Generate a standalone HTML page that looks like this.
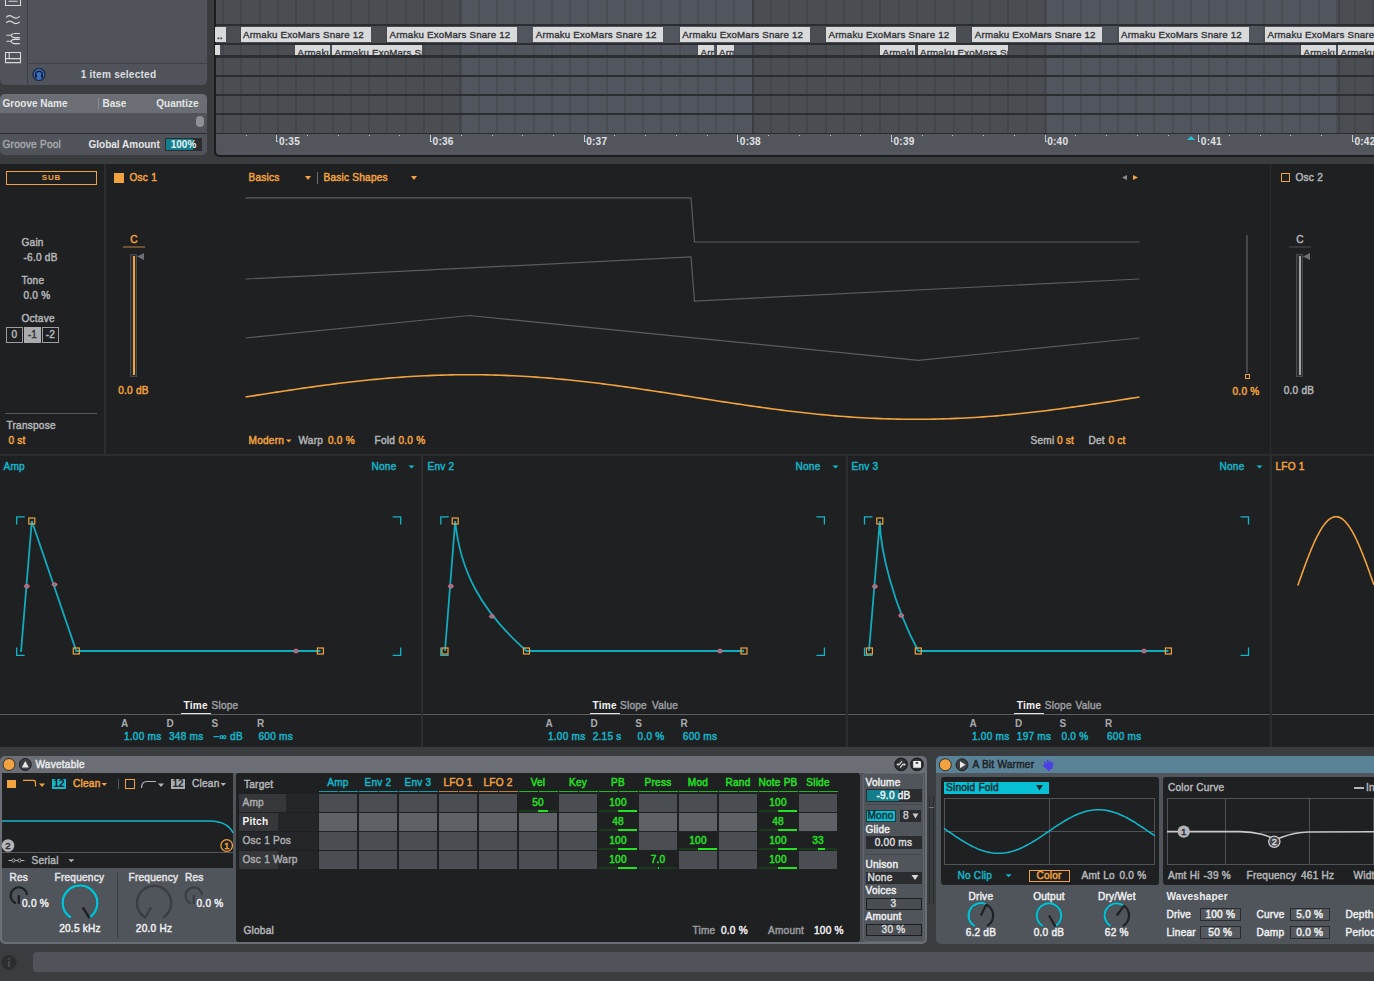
<!DOCTYPE html>
<html><head><meta charset="utf-8"><style>
html,body{margin:0;padding:0;width:1374px;height:981px;overflow:hidden;background:#393d40;}
body{position:relative;font-family:"Liberation Sans",sans-serif;}
.a{position:absolute;z-index:0;}
.t{position:absolute;line-height:14px;white-space:nowrap;z-index:2;-webkit-font-smoothing:antialiased;}
svg{position:absolute;left:0;top:0;z-index:1;}
</style></head><body>
<div class="a" style="left:0px;top:0px;width:1374px;height:164px;background:#393d40;"></div><div class="a" style="left:0px;top:0px;width:207px;height:85px;background:#50545a;border-radius:0 0 5px 5px;"></div><div class="a" style="left:27px;top:0px;width:1px;height:85px;background:#3d4044;"></div><div class="a" style="left:28px;top:63px;width:179px;height:1px;background:#3f4246;"></div><div class="t" style="top:67.80px;font-size:10.1px;color:#dcdde0;letter-spacing:0.22px;font-weight:700;left:18.5px;width:200px;text-align:center;">1 item selected</div><div class="a" style="left:0px;top:94px;width:207px;height:39px;background:#50545a;border-radius:5px 5px 0 0;"></div><div class="a" style="left:0px;top:94px;width:207px;height:19px;background:#6b6f75;border-radius:5px 5px 0 0;"></div><div class="t" style="top:96.50px;font-size:10px;color:#e4e5e7;font-weight:700;left:2.5px;">Groove Name</div><div class="a" style="left:98px;top:98px;width:1px;height:11px;background:#8b8e93;"></div><div class="t" style="top:96.50px;font-size:10px;color:#e4e5e7;font-weight:700;left:102.5px;">Base</div><div class="t" style="top:96.50px;font-size:10px;color:#e4e5e7;font-weight:700;left:-101.5px;width:300px;text-align:right;">Quantize</div><div class="a" style="left:196px;top:116px;width:8px;height:11px;background:#8d9095;border-radius:4px;"></div><div class="a" style="left:0px;top:133px;width:207px;height:1px;background:#2c2e31;"></div><div class="a" style="left:0px;top:134px;width:207px;height:21px;background:#50545a;border-radius:0 0 5px 5px;"></div><div class="t" style="top:137.80px;font-size:10.1px;color:#a4a7ab;letter-spacing:0.22px;-webkit-text-stroke:0.45px currentColor;left:2.5px;">Groove Pool</div><div class="t" style="top:137.50px;font-size:10px;color:#e4e5e7;font-weight:700;left:88.5px;">Global Amount</div><div class="a" style="left:165px;top:138px;width:37px;height:13px;background:#2a2c2f;"></div><div class="a" style="left:166px;top:139px;width:27px;height:11px;background:#137d8c;"></div><div class="t" style="top:137.50px;font-size:10px;color:#e8f4f6;font-weight:700;left:83.5px;width:200px;text-align:center;">100%</div><div class="a" style="left:214px;top:0px;width:1160px;height:157px;background:#1c1d1f;border-radius:0 0 0 5px;"></div><div class="a" style="left:215.5px;top:0px;width:1158.5px;height:133px;background:#51555d;"></div><div class="a" style="left:215.5px;top:0px;width:244.5px;height:133px;background:#4a4d52;"></div><div class="a" style="left:752px;top:0px;width:293px;height:133px;background:#4a4d52;"></div><div class="a" style="left:1338px;top:0px;width:36px;height:133px;background:#4a4d52;"></div><div class="a" style="left:221.5px;top:0px;width:2px;height:133px;background:rgba(0,0,0,0.09);"></div><div class="a" style="left:239.5px;top:0px;width:2px;height:133px;background:rgba(0,0,0,0.09);"></div><div class="a" style="left:258.5px;top:0px;width:2px;height:133px;background:rgba(0,0,0,0.09);"></div><div class="a" style="left:276.5px;top:0px;width:2px;height:133px;background:rgba(0,0,0,0.09);"></div><div class="a" style="left:294.5px;top:0px;width:2px;height:133px;background:rgba(0,0,0,0.09);"></div><div class="a" style="left:312.5px;top:0px;width:2px;height:133px;background:rgba(0,0,0,0.09);"></div><div class="a" style="left:331.5px;top:0px;width:2px;height:133px;background:rgba(0,0,0,0.09);"></div><div class="a" style="left:349.5px;top:0px;width:2px;height:133px;background:rgba(0,0,0,0.09);"></div><div class="a" style="left:367.5px;top:0px;width:2px;height:133px;background:rgba(0,0,0,0.09);"></div><div class="a" style="left:385.5px;top:0px;width:2px;height:133px;background:rgba(0,0,0,0.09);"></div><div class="a" style="left:404.5px;top:0px;width:2px;height:133px;background:rgba(0,0,0,0.09);"></div><div class="a" style="left:422.5px;top:0px;width:2px;height:133px;background:rgba(0,0,0,0.09);"></div><div class="a" style="left:440.5px;top:0px;width:2px;height:133px;background:rgba(0,0,0,0.09);"></div><div class="a" style="left:458.5px;top:0px;width:2px;height:133px;background:rgba(0,0,0,0.09);"></div><div class="a" style="left:477.5px;top:0px;width:2px;height:133px;background:rgba(0,0,0,0.09);"></div><div class="a" style="left:495.5px;top:0px;width:2px;height:133px;background:rgba(0,0,0,0.09);"></div><div class="a" style="left:513.5px;top:0px;width:2px;height:133px;background:rgba(0,0,0,0.09);"></div><div class="a" style="left:532.5px;top:0px;width:2px;height:133px;background:rgba(0,0,0,0.09);"></div><div class="a" style="left:550.5px;top:0px;width:2px;height:133px;background:rgba(0,0,0,0.09);"></div><div class="a" style="left:568.5px;top:0px;width:2px;height:133px;background:rgba(0,0,0,0.09);"></div><div class="a" style="left:586.5px;top:0px;width:2px;height:133px;background:rgba(0,0,0,0.09);"></div><div class="a" style="left:605.5px;top:0px;width:2px;height:133px;background:rgba(0,0,0,0.09);"></div><div class="a" style="left:623.5px;top:0px;width:2px;height:133px;background:rgba(0,0,0,0.09);"></div><div class="a" style="left:641.5px;top:0px;width:2px;height:133px;background:rgba(0,0,0,0.09);"></div><div class="a" style="left:659.5px;top:0px;width:2px;height:133px;background:rgba(0,0,0,0.09);"></div><div class="a" style="left:678.5px;top:0px;width:2px;height:133px;background:rgba(0,0,0,0.09);"></div><div class="a" style="left:696.5px;top:0px;width:2px;height:133px;background:rgba(0,0,0,0.09);"></div><div class="a" style="left:714.5px;top:0px;width:2px;height:133px;background:rgba(0,0,0,0.09);"></div><div class="a" style="left:732.5px;top:0px;width:2px;height:133px;background:rgba(0,0,0,0.09);"></div><div class="a" style="left:751.5px;top:0px;width:2px;height:133px;background:rgba(0,0,0,0.09);"></div><div class="a" style="left:769.5px;top:0px;width:2px;height:133px;background:rgba(0,0,0,0.09);"></div><div class="a" style="left:787.5px;top:0px;width:2px;height:133px;background:rgba(0,0,0,0.09);"></div><div class="a" style="left:805.5px;top:0px;width:2px;height:133px;background:rgba(0,0,0,0.09);"></div><div class="a" style="left:824.5px;top:0px;width:2px;height:133px;background:rgba(0,0,0,0.09);"></div><div class="a" style="left:842.5px;top:0px;width:2px;height:133px;background:rgba(0,0,0,0.09);"></div><div class="a" style="left:860.5px;top:0px;width:2px;height:133px;background:rgba(0,0,0,0.09);"></div><div class="a" style="left:878.5px;top:0px;width:2px;height:133px;background:rgba(0,0,0,0.09);"></div><div class="a" style="left:897.5px;top:0px;width:2px;height:133px;background:rgba(0,0,0,0.09);"></div><div class="a" style="left:915.5px;top:0px;width:2px;height:133px;background:rgba(0,0,0,0.09);"></div><div class="a" style="left:933.5px;top:0px;width:2px;height:133px;background:rgba(0,0,0,0.09);"></div><div class="a" style="left:952.5px;top:0px;width:2px;height:133px;background:rgba(0,0,0,0.09);"></div><div class="a" style="left:970.5px;top:0px;width:2px;height:133px;background:rgba(0,0,0,0.09);"></div><div class="a" style="left:988.5px;top:0px;width:2px;height:133px;background:rgba(0,0,0,0.09);"></div><div class="a" style="left:1006.5px;top:0px;width:2px;height:133px;background:rgba(0,0,0,0.09);"></div><div class="a" style="left:1025.5px;top:0px;width:2px;height:133px;background:rgba(0,0,0,0.09);"></div><div class="a" style="left:1043.5px;top:0px;width:2px;height:133px;background:rgba(0,0,0,0.09);"></div><div class="a" style="left:1061.5px;top:0px;width:2px;height:133px;background:rgba(0,0,0,0.09);"></div><div class="a" style="left:1079.5px;top:0px;width:2px;height:133px;background:rgba(0,0,0,0.09);"></div><div class="a" style="left:1098.5px;top:0px;width:2px;height:133px;background:rgba(0,0,0,0.09);"></div><div class="a" style="left:1116.5px;top:0px;width:2px;height:133px;background:rgba(0,0,0,0.09);"></div><div class="a" style="left:1134.5px;top:0px;width:2px;height:133px;background:rgba(0,0,0,0.09);"></div><div class="a" style="left:1152.5px;top:0px;width:2px;height:133px;background:rgba(0,0,0,0.09);"></div><div class="a" style="left:1171.5px;top:0px;width:2px;height:133px;background:rgba(0,0,0,0.09);"></div><div class="a" style="left:1189.5px;top:0px;width:2px;height:133px;background:rgba(0,0,0,0.09);"></div><div class="a" style="left:1207.5px;top:0px;width:2px;height:133px;background:rgba(0,0,0,0.09);"></div><div class="a" style="left:1225.5px;top:0px;width:2px;height:133px;background:rgba(0,0,0,0.09);"></div><div class="a" style="left:1244.5px;top:0px;width:2px;height:133px;background:rgba(0,0,0,0.09);"></div><div class="a" style="left:1262.5px;top:0px;width:2px;height:133px;background:rgba(0,0,0,0.09);"></div><div class="a" style="left:1280.5px;top:0px;width:2px;height:133px;background:rgba(0,0,0,0.09);"></div><div class="a" style="left:1298.5px;top:0px;width:2px;height:133px;background:rgba(0,0,0,0.09);"></div><div class="a" style="left:1317.5px;top:0px;width:2px;height:133px;background:rgba(0,0,0,0.09);"></div><div class="a" style="left:1335.5px;top:0px;width:2px;height:133px;background:rgba(0,0,0,0.09);"></div><div class="a" style="left:1353.5px;top:0px;width:2px;height:133px;background:rgba(0,0,0,0.09);"></div><div class="a" style="left:1371.5px;top:0px;width:2px;height:133px;background:rgba(0,0,0,0.09);"></div><div class="a" style="left:459.5px;top:0px;width:2px;height:133px;background:rgba(0,0,0,0.12);"></div><div class="a" style="left:751.5px;top:0px;width:2px;height:133px;background:rgba(0,0,0,0.12);"></div><div class="a" style="left:1044.5px;top:0px;width:2px;height:133px;background:rgba(0,0,0,0.12);"></div><div class="a" style="left:1337.5px;top:0px;width:2px;height:133px;background:rgba(0,0,0,0.12);"></div><div class="a" style="left:215.5px;top:24px;width:1158.5px;height:2px;background:#2b2d30;"></div><div class="a" style="left:215.5px;top:43px;width:1158.5px;height:2px;background:#2b2d30;"></div><div class="a" style="left:215.5px;top:55px;width:1158.5px;height:3px;background:#2b2d30;"></div><div class="a" style="left:215.5px;top:75px;width:1158.5px;height:1.5px;background:#2b2d30;"></div><div class="a" style="left:215.5px;top:94px;width:1158.5px;height:1.5px;background:#2b2d30;"></div><div class="a" style="left:215.5px;top:113px;width:1158.5px;height:1.5px;background:#2b2d30;"></div><div class="a" style="left:215.5px;top:132.5px;width:1158.5px;height:22px;background:#52565c;border-radius:0 0 0 4px;"></div><div class="a" style="left:215.5px;top:132.5px;width:1158.5px;height:1.5px;background:#2b2d30;"></div><div class="a" style="left:215px;top:27px;width:11px;height:15px;background:#d9dadc;"></div><div class="t" style="top:29.00px;font-size:10px;color:#2b2c2e;-webkit-text-stroke:0.45px currentColor;left:217px;">..</div><div class="a" style="left:240.5px;top:27px;width:130px;height:15px;background:#d9dadc;overflow:hidden"><div class="t" style="left:2.5px;top:-0.2px;line-height:15px;font-size:9.7px;letter-spacing:0.2px;color:#333437;-webkit-text-stroke:0.35px #333437">Armaku ExoMars Snare 12</div></div><div class="a" style="left:387px;top:27px;width:130px;height:15px;background:#d9dadc;overflow:hidden"><div class="t" style="left:2.5px;top:-0.2px;line-height:15px;font-size:9.7px;letter-spacing:0.2px;color:#333437;-webkit-text-stroke:0.35px #333437">Armaku ExoMars Snare 12</div></div><div class="a" style="left:533.3px;top:27px;width:130px;height:15px;background:#d9dadc;overflow:hidden"><div class="t" style="left:2.5px;top:-0.2px;line-height:15px;font-size:9.7px;letter-spacing:0.2px;color:#333437;-webkit-text-stroke:0.35px #333437">Armaku ExoMars Snare 12</div></div><div class="a" style="left:679.8px;top:27px;width:130px;height:15px;background:#d9dadc;overflow:hidden"><div class="t" style="left:2.5px;top:-0.2px;line-height:15px;font-size:9.7px;letter-spacing:0.2px;color:#333437;-webkit-text-stroke:0.35px #333437">Armaku ExoMars Snare 12</div></div><div class="a" style="left:826px;top:27px;width:130px;height:15px;background:#d9dadc;overflow:hidden"><div class="t" style="left:2.5px;top:-0.2px;line-height:15px;font-size:9.7px;letter-spacing:0.2px;color:#333437;-webkit-text-stroke:0.35px #333437">Armaku ExoMars Snare 12</div></div><div class="a" style="left:972.3px;top:27px;width:130px;height:15px;background:#d9dadc;overflow:hidden"><div class="t" style="left:2.5px;top:-0.2px;line-height:15px;font-size:9.7px;letter-spacing:0.2px;color:#333437;-webkit-text-stroke:0.35px #333437">Armaku ExoMars Snare 12</div></div><div class="a" style="left:1118.5px;top:27px;width:130px;height:15px;background:#d9dadc;overflow:hidden"><div class="t" style="left:2.5px;top:-0.2px;line-height:15px;font-size:9.7px;letter-spacing:0.2px;color:#333437;-webkit-text-stroke:0.35px #333437">Armaku ExoMars Snare 12</div></div><div class="a" style="left:1265px;top:27px;width:109px;height:15px;background:#d9dadc;overflow:hidden"><div class="t" style="left:2.5px;top:-0.2px;line-height:15px;font-size:9.7px;letter-spacing:0.2px;color:#333437;-webkit-text-stroke:0.35px #333437">Armaku ExoMars Snare 12</div></div><div class="a" style="left:215px;top:45px;width:5px;height:10px;background:#d9dadc;"></div><div class="a" style="left:295px;top:45px;width:35px;height:10px;background:#d9dadc;overflow:hidden"><div class="t" style="left:2.5px;top:1.0px;line-height:14px;font-size:9.7px;letter-spacing:0.2px;color:#333437;-webkit-text-stroke:0.35px #333437;white-space:nowrap">Armaku</div></div><div class="a" style="left:332px;top:45px;width:90px;height:10px;background:#d9dadc;overflow:hidden"><div class="t" style="left:2.5px;top:1.0px;line-height:14px;font-size:9.7px;letter-spacing:0.2px;color:#333437;-webkit-text-stroke:0.35px #333437;white-space:nowrap">Armaku ExoMars Snare 12</div></div><div class="a" style="left:698px;top:45px;width:16px;height:10px;background:#d9dadc;overflow:hidden"><div class="t" style="left:2.5px;top:1.0px;line-height:14px;font-size:9.7px;letter-spacing:0.2px;color:#333437;-webkit-text-stroke:0.35px #333437;white-space:nowrap">Armaku</div></div><div class="a" style="left:716.5px;top:45px;width:17px;height:10px;background:#d9dadc;overflow:hidden"><div class="t" style="left:2.5px;top:1.0px;line-height:14px;font-size:9.7px;letter-spacing:0.2px;color:#333437;-webkit-text-stroke:0.35px #333437;white-space:nowrap">Armaku</div></div><div class="a" style="left:880px;top:45px;width:35px;height:10px;background:#d9dadc;overflow:hidden"><div class="t" style="left:2.5px;top:1.0px;line-height:14px;font-size:9.7px;letter-spacing:0.2px;color:#333437;-webkit-text-stroke:0.35px #333437;white-space:nowrap">Armaku</div></div><div class="a" style="left:917.5px;top:45px;width:90px;height:10px;background:#d9dadc;overflow:hidden"><div class="t" style="left:2.5px;top:1.0px;line-height:14px;font-size:9.7px;letter-spacing:0.2px;color:#333437;-webkit-text-stroke:0.35px #333437;white-space:nowrap">Armaku ExoMars Snare 12</div></div><div class="a" style="left:1301px;top:45px;width:35px;height:10px;background:#d9dadc;overflow:hidden"><div class="t" style="left:2.5px;top:1.0px;line-height:14px;font-size:9.7px;letter-spacing:0.2px;color:#333437;-webkit-text-stroke:0.35px #333437;white-space:nowrap">Armaku</div></div><div class="a" style="left:1338px;top:45px;width:40px;height:10px;background:#d9dadc;overflow:hidden"><div class="t" style="left:2.5px;top:1.0px;line-height:14px;font-size:9.7px;letter-spacing:0.2px;color:#333437;-webkit-text-stroke:0.35px #333437;white-space:nowrap">Armaku ExoMars Snare 12</div></div><div class="a" style="left:246px;top:135px;width:1px;height:1px;background:#c7c9cc;"></div><div class="a" style="left:307px;top:135px;width:1px;height:1px;background:#c7c9cc;"></div><div class="a" style="left:338px;top:135px;width:1px;height:1px;background:#c7c9cc;"></div><div class="a" style="left:369px;top:135px;width:1px;height:1px;background:#c7c9cc;"></div><div class="a" style="left:399px;top:135px;width:1px;height:1px;background:#c7c9cc;"></div><div class="a" style="left:276px;top:135px;width:1px;height:7px;background:#c7c9cc;"></div><div class="a" style="left:276px;top:141px;width:2px;height:1px;background:#c7c9cc;"></div><div class="t" style="top:134.80px;font-size:10.1px;color:#e0e1e3;letter-spacing:0.22px;font-weight:700;left:278.9px;">0:35</div><div class="a" style="left:461px;top:135px;width:1px;height:1px;background:#c7c9cc;"></div><div class="a" style="left:492px;top:135px;width:1px;height:1px;background:#c7c9cc;"></div><div class="a" style="left:522px;top:135px;width:1px;height:1px;background:#c7c9cc;"></div><div class="a" style="left:553px;top:135px;width:1px;height:1px;background:#c7c9cc;"></div><div class="a" style="left:430px;top:135px;width:1px;height:7px;background:#c7c9cc;"></div><div class="a" style="left:430px;top:141px;width:2px;height:1px;background:#c7c9cc;"></div><div class="t" style="top:134.80px;font-size:10.1px;color:#e0e1e3;letter-spacing:0.22px;font-weight:700;left:432.54999999999995px;">0:36</div><div class="a" style="left:614px;top:135px;width:1px;height:1px;background:#c7c9cc;"></div><div class="a" style="left:645px;top:135px;width:1px;height:1px;background:#c7c9cc;"></div><div class="a" style="left:676px;top:135px;width:1px;height:1px;background:#c7c9cc;"></div><div class="a" style="left:707px;top:135px;width:1px;height:1px;background:#c7c9cc;"></div><div class="a" style="left:584px;top:135px;width:1px;height:7px;background:#c7c9cc;"></div><div class="a" style="left:584px;top:141px;width:2px;height:1px;background:#c7c9cc;"></div><div class="t" style="top:134.80px;font-size:10.1px;color:#e0e1e3;letter-spacing:0.22px;font-weight:700;left:586.2px;">0:37</div><div class="a" style="left:768px;top:135px;width:1px;height:1px;background:#c7c9cc;"></div><div class="a" style="left:799px;top:135px;width:1px;height:1px;background:#c7c9cc;"></div><div class="a" style="left:830px;top:135px;width:1px;height:1px;background:#c7c9cc;"></div><div class="a" style="left:860px;top:135px;width:1px;height:1px;background:#c7c9cc;"></div><div class="a" style="left:737px;top:135px;width:1px;height:7px;background:#c7c9cc;"></div><div class="a" style="left:737px;top:141px;width:2px;height:1px;background:#c7c9cc;"></div><div class="t" style="top:134.80px;font-size:10.1px;color:#e0e1e3;letter-spacing:0.22px;font-weight:700;left:739.85px;">0:38</div><div class="a" style="left:922px;top:135px;width:1px;height:1px;background:#c7c9cc;"></div><div class="a" style="left:952px;top:135px;width:1px;height:1px;background:#c7c9cc;"></div><div class="a" style="left:983px;top:135px;width:1px;height:1px;background:#c7c9cc;"></div><div class="a" style="left:1014px;top:135px;width:1px;height:1px;background:#c7c9cc;"></div><div class="a" style="left:891px;top:135px;width:1px;height:7px;background:#c7c9cc;"></div><div class="a" style="left:891px;top:141px;width:2px;height:1px;background:#c7c9cc;"></div><div class="t" style="top:134.80px;font-size:10.1px;color:#e0e1e3;letter-spacing:0.22px;font-weight:700;left:893.5px;">0:39</div><div class="a" style="left:1075px;top:135px;width:1px;height:1px;background:#c7c9cc;"></div><div class="a" style="left:1106px;top:135px;width:1px;height:1px;background:#c7c9cc;"></div><div class="a" style="left:1137px;top:135px;width:1px;height:1px;background:#c7c9cc;"></div><div class="a" style="left:1168px;top:135px;width:1px;height:1px;background:#c7c9cc;"></div><div class="a" style="left:1045px;top:135px;width:1px;height:7px;background:#c7c9cc;"></div><div class="a" style="left:1045px;top:141px;width:2px;height:1px;background:#c7c9cc;"></div><div class="t" style="top:134.80px;font-size:10.1px;color:#e0e1e3;letter-spacing:0.22px;font-weight:700;left:1047.15px;">0:40</div><div class="a" style="left:1229px;top:135px;width:1px;height:1px;background:#c7c9cc;"></div><div class="a" style="left:1260px;top:135px;width:1px;height:1px;background:#c7c9cc;"></div><div class="a" style="left:1290px;top:135px;width:1px;height:1px;background:#c7c9cc;"></div><div class="a" style="left:1321px;top:135px;width:1px;height:1px;background:#c7c9cc;"></div><div class="a" style="left:1198px;top:135px;width:1px;height:7px;background:#c7c9cc;"></div><div class="a" style="left:1198px;top:141px;width:2px;height:1px;background:#c7c9cc;"></div><div class="t" style="top:134.80px;font-size:10.1px;color:#e0e1e3;letter-spacing:0.22px;font-weight:700;left:1200.8000000000002px;">0:41</div><div class="a" style="left:1352px;top:135px;width:1px;height:7px;background:#c7c9cc;"></div><div class="a" style="left:1352px;top:141px;width:2px;height:1px;background:#c7c9cc;"></div><div class="t" style="top:134.80px;font-size:10.1px;color:#e0e1e3;letter-spacing:0.22px;font-weight:700;left:1354.4499999999998px;">0:42</div><div class="a" style="left:0px;top:164px;width:1374px;height:583px;background:#1f2021;"></div><div class="a" style="left:103.5px;top:164px;width:2px;height:291px;background:#2c2d2f;"></div><div class="a" style="left:1270px;top:164px;width:1px;height:291px;background:#2c2d2f;"></div><div class="a" style="left:0px;top:454px;width:1374px;height:2px;background:#2c2d2f;"></div><div class="a" style="left:6px;top:171px;width:91px;height:14px;box-shadow:inset 0 0 0 1px #f2a340;"></div><div class="t" style="top:171.00px;font-size:8px;color:#f2a340;font-weight:700;left:-48.5px;width:200px;text-align:center;letter-spacing:0.8px">SUB</div><div class="t" style="top:235.80px;font-size:10.1px;color:#b3b5b8;letter-spacing:0.22px;-webkit-text-stroke:0.45px currentColor;left:21.5px;">Gain</div><div class="t" style="top:250.80px;font-size:10.1px;color:#b3b5b8;letter-spacing:0.22px;-webkit-text-stroke:0.45px currentColor;left:23.5px;">-6.0 dB</div><div class="t" style="top:273.80px;font-size:10.1px;color:#b3b5b8;letter-spacing:0.22px;-webkit-text-stroke:0.45px currentColor;left:21.5px;">Tone</div><div class="t" style="top:288.80px;font-size:10.1px;color:#b3b5b8;letter-spacing:0.22px;-webkit-text-stroke:0.45px currentColor;left:23.5px;">0.0 %</div><div class="t" style="top:311.80px;font-size:10.1px;color:#b3b5b8;letter-spacing:0.22px;-webkit-text-stroke:0.45px currentColor;left:21.5px;">Octave</div><div class="a" style="left:6px;top:327px;width:17px;height:16px;box-shadow:inset 0 0 0 1px #9c9ea1;"></div><div class="t" style="top:328.30px;font-size:10.1px;color:#b3b5b8;letter-spacing:0.22px;-webkit-text-stroke:0.45px currentColor;left:-85.5px;width:200px;text-align:center;">0</div><div class="a" style="left:24px;top:327px;width:17px;height:16px;background:#a9abae;"></div><div class="t" style="top:328.30px;font-size:10.1px;color:#36383b;letter-spacing:0.22px;-webkit-text-stroke:0.45px currentColor;left:-67.5px;width:200px;text-align:center;">-1</div><div class="a" style="left:42px;top:327px;width:17px;height:16px;box-shadow:inset 0 0 0 1px #9c9ea1;"></div><div class="t" style="top:328.30px;font-size:10.1px;color:#b3b5b8;letter-spacing:0.22px;-webkit-text-stroke:0.45px currentColor;left:-49.5px;width:200px;text-align:center;">-2</div><div class="a" style="left:5px;top:413px;width:92px;height:1px;background:#56585b;"></div><div class="t" style="top:418.80px;font-size:10.1px;color:#b3b5b8;letter-spacing:0.22px;-webkit-text-stroke:0.45px currentColor;left:6.5px;">Transpose</div><div class="t" style="top:433.80px;font-size:10.1px;color:#f2a340;letter-spacing:0.22px;-webkit-text-stroke:0.45px currentColor;left:8.5px;">0 st</div><div class="a" style="left:114px;top:173px;width:10px;height:10px;background:#f2a340;"></div><div class="t" style="top:170.80px;font-size:10.1px;color:#f2a340;letter-spacing:0.22px;-webkit-text-stroke:0.45px currentColor;left:129.5px;">Osc 1</div><div class="t" style="top:232.80px;font-size:10.1px;color:#f2a340;letter-spacing:0.22px;-webkit-text-stroke:0.45px currentColor;left:34px;width:200px;text-align:center;">C</div><div class="a" style="left:123px;top:246px;width:22px;height:1.5px;background:#6f5232;"></div><div class="a" style="left:130px;top:254px;width:7px;height:123px;background:#2c2e31;box-shadow:inset 0 0 0 1px #46494d;"></div><div class="a" style="left:132.5px;top:256px;width:2px;height:119px;background:#f2a340;"></div><div class="t" style="top:383.80px;font-size:10.1px;color:#f2a340;letter-spacing:0.22px;-webkit-text-stroke:0.45px currentColor;left:33.5px;width:200px;text-align:center;">0.0 dB</div><div class="t" style="top:170.80px;font-size:10.1px;color:#f2a340;letter-spacing:0.22px;-webkit-text-stroke:0.45px currentColor;left:248.5px;">Basics</div><div class="a" style="left:317px;top:172px;width:1px;height:12px;background:#6d6f72;"></div><div class="t" style="top:170.80px;font-size:10.1px;color:#f2a340;letter-spacing:0.22px;-webkit-text-stroke:0.45px currentColor;left:323.5px;">Basic Shapes</div><div class="t" style="top:433.80px;font-size:10.1px;color:#f2a340;letter-spacing:0.22px;-webkit-text-stroke:0.45px currentColor;left:248.5px;">Modern</div><div class="t" style="top:433.80px;font-size:10.1px;color:#b3b5b8;letter-spacing:0.22px;-webkit-text-stroke:0.45px currentColor;left:298.5px;">Warp</div><div class="t" style="top:433.80px;font-size:10.1px;color:#f2a340;letter-spacing:0.22px;-webkit-text-stroke:0.45px currentColor;left:328px;">0.0 %</div><div class="t" style="top:433.80px;font-size:10.1px;color:#b3b5b8;letter-spacing:0.22px;-webkit-text-stroke:0.45px currentColor;left:374.5px;">Fold</div><div class="t" style="top:433.80px;font-size:10.1px;color:#f2a340;letter-spacing:0.22px;-webkit-text-stroke:0.45px currentColor;left:398.5px;">0.0 %</div><div class="t" style="top:433.80px;font-size:10.1px;color:#b3b5b8;letter-spacing:0.22px;-webkit-text-stroke:0.45px currentColor;left:1030.5px;">Semi</div><div class="t" style="top:433.80px;font-size:10.1px;color:#f2a340;letter-spacing:0.22px;-webkit-text-stroke:0.45px currentColor;left:1057px;">0 st</div><div class="t" style="top:433.80px;font-size:10.1px;color:#b3b5b8;letter-spacing:0.22px;-webkit-text-stroke:0.45px currentColor;left:1088.5px;">Det</div><div class="t" style="top:433.80px;font-size:10.1px;color:#f2a340;letter-spacing:0.22px;-webkit-text-stroke:0.45px currentColor;left:1108.5px;">0 ct</div><div class="a" style="left:1246px;top:235px;width:1.5px;height:138px;background:#46494c;"></div><div class="a" style="left:1244.5px;top:373.5px;width:5.5px;height:5.5px;box-shadow:inset 0 0 0 1px #f2a340;"></div><div class="t" style="top:384.80px;font-size:10.1px;color:#f2a340;letter-spacing:0.22px;-webkit-text-stroke:0.45px currentColor;left:1146px;width:200px;text-align:center;">0.0 %</div><div class="a" style="left:1281px;top:173px;width:9px;height:9px;box-shadow:inset 0 0 0 1px #f2a340;"></div><div class="t" style="top:170.80px;font-size:10.1px;color:#b3b5b8;letter-spacing:0.22px;-webkit-text-stroke:0.45px currentColor;left:1295.5px;">Osc 2</div><div class="t" style="top:232.80px;font-size:10.1px;color:#b3b5b8;letter-spacing:0.22px;-webkit-text-stroke:0.45px currentColor;left:1200px;width:200px;text-align:center;">C</div><div class="a" style="left:1289px;top:246px;width:22px;height:1.5px;background:#35373a;"></div><div class="a" style="left:1296px;top:254px;width:7px;height:123px;background:#2c2e31;box-shadow:inset 0 0 0 1px #46494d;"></div><div class="a" style="left:1298.5px;top:256px;width:2px;height:119px;background:#a3a5a8;"></div><div class="t" style="top:383.80px;font-size:10.1px;color:#b3b5b8;letter-spacing:0.22px;-webkit-text-stroke:0.45px currentColor;left:1199px;width:200px;text-align:center;">0.0 dB</div><div class="a" style="left:421px;top:456px;width:2px;height:291px;background:#2c2d2f;"></div><div class="a" style="left:846px;top:456px;width:2px;height:291px;background:#2c2d2f;"></div><div class="a" style="left:1270px;top:456px;width:2px;height:291px;background:#2c2d2f;"></div><div class="t" style="top:459.80px;font-size:10.1px;color:#12b5c9;letter-spacing:0.22px;-webkit-text-stroke:0.45px currentColor;left:3.5px;">Amp</div><div class="t" style="top:459.80px;font-size:10.1px;color:#12b5c9;letter-spacing:0.22px;-webkit-text-stroke:0.45px currentColor;left:371.5px;">None</div><div class="t" style="top:698.80px;font-size:10.1px;color:#f2f2f2;letter-spacing:0.22px;font-weight:700;left:183.5px;">Time</div><div class="t" style="top:698.80px;font-size:10.1px;color:#9a9ca0;letter-spacing:0.22px;-webkit-text-stroke:0.45px currentColor;left:211.5px;">Slope</div><div class="a" style="left:180.5px;top:713px;width:30px;height:2px;background:#e6e6e6;"></div><div class="a" style="left:0px;top:714px;width:421px;height:1px;background:#5b5d60;"></div><div class="t" style="top:716.50px;font-size:10px;color:#a9abae;font-weight:700;left:121px;">A</div><div class="t" style="top:716.50px;font-size:10px;color:#a9abae;font-weight:700;left:166.5px;">D</div><div class="t" style="top:716.50px;font-size:10px;color:#a9abae;font-weight:700;left:211.5px;">S</div><div class="t" style="top:716.50px;font-size:10px;color:#a9abae;font-weight:700;left:257px;">R</div><div class="t" style="top:729.80px;font-size:10.1px;color:#12b5c9;letter-spacing:0.22px;-webkit-text-stroke:0.45px currentColor;left:124px;">1.00 ms</div><div class="t" style="top:729.80px;font-size:10.1px;color:#12b5c9;letter-spacing:0.22px;-webkit-text-stroke:0.45px currentColor;left:169px;">348 ms</div><div class="t" style="top:729.80px;font-size:10.1px;color:#12b5c9;letter-spacing:0.22px;-webkit-text-stroke:0.45px currentColor;left:213.5px;">−∞ dB</div><div class="t" style="top:729.80px;font-size:10.1px;color:#12b5c9;letter-spacing:0.22px;-webkit-text-stroke:0.45px currentColor;left:258.5px;">600 ms</div><div class="t" style="top:459.80px;font-size:10.1px;color:#12b5c9;letter-spacing:0.22px;-webkit-text-stroke:0.45px currentColor;left:427.5px;">Env 2</div><div class="t" style="top:459.80px;font-size:10.1px;color:#12b5c9;letter-spacing:0.22px;-webkit-text-stroke:0.45px currentColor;left:795.5px;">None</div><div class="t" style="top:698.80px;font-size:10.1px;color:#f2f2f2;letter-spacing:0.22px;font-weight:700;left:592.5px;">Time</div><div class="t" style="top:698.80px;font-size:10.1px;color:#9a9ca0;letter-spacing:0.22px;-webkit-text-stroke:0.45px currentColor;left:620px;">Slope</div><div class="t" style="top:698.80px;font-size:10.1px;color:#9a9ca0;letter-spacing:0.22px;-webkit-text-stroke:0.45px currentColor;left:652px;">Value</div><div class="a" style="left:589.5px;top:713px;width:30px;height:2px;background:#e6e6e6;"></div><div class="a" style="left:423px;top:714px;width:423px;height:1px;background:#5b5d60;"></div><div class="t" style="top:716.50px;font-size:10px;color:#a9abae;font-weight:700;left:545.5px;">A</div><div class="t" style="top:716.50px;font-size:10px;color:#a9abae;font-weight:700;left:590.5px;">D</div><div class="t" style="top:716.50px;font-size:10px;color:#a9abae;font-weight:700;left:635.3px;">S</div><div class="t" style="top:716.50px;font-size:10px;color:#a9abae;font-weight:700;left:680.5px;">R</div><div class="t" style="top:729.80px;font-size:10.1px;color:#12b5c9;letter-spacing:0.22px;-webkit-text-stroke:0.45px currentColor;left:548px;">1.00 ms</div><div class="t" style="top:729.80px;font-size:10.1px;color:#12b5c9;letter-spacing:0.22px;-webkit-text-stroke:0.45px currentColor;left:592.7px;">2.15 s</div><div class="t" style="top:729.80px;font-size:10.1px;color:#12b5c9;letter-spacing:0.22px;-webkit-text-stroke:0.45px currentColor;left:637.6px;">0.0 %</div><div class="t" style="top:729.80px;font-size:10.1px;color:#12b5c9;letter-spacing:0.22px;-webkit-text-stroke:0.45px currentColor;left:682.8px;">600 ms</div><div class="t" style="top:459.80px;font-size:10.1px;color:#12b5c9;letter-spacing:0.22px;-webkit-text-stroke:0.45px currentColor;left:851.5px;">Env 3</div><div class="t" style="top:459.80px;font-size:10.1px;color:#12b5c9;letter-spacing:0.22px;-webkit-text-stroke:0.45px currentColor;left:1219.5px;">None</div><div class="t" style="top:698.80px;font-size:10.1px;color:#f2f2f2;letter-spacing:0.22px;font-weight:700;left:1016.8px;">Time</div><div class="t" style="top:698.80px;font-size:10.1px;color:#9a9ca0;letter-spacing:0.22px;-webkit-text-stroke:0.45px currentColor;left:1044.8px;">Slope</div><div class="t" style="top:698.80px;font-size:10.1px;color:#9a9ca0;letter-spacing:0.22px;-webkit-text-stroke:0.45px currentColor;left:1075.5px;">Value</div><div class="a" style="left:1013.8px;top:713px;width:30px;height:2px;background:#e6e6e6;"></div><div class="a" style="left:848px;top:714px;width:422px;height:1px;background:#5b5d60;"></div><div class="t" style="top:716.50px;font-size:10px;color:#a9abae;font-weight:700;left:969.4px;">A</div><div class="t" style="top:716.50px;font-size:10px;color:#a9abae;font-weight:700;left:1014.9px;">D</div><div class="t" style="top:716.50px;font-size:10px;color:#a9abae;font-weight:700;left:1059.6px;">S</div><div class="t" style="top:716.50px;font-size:10px;color:#a9abae;font-weight:700;left:1105px;">R</div><div class="t" style="top:729.80px;font-size:10.1px;color:#12b5c9;letter-spacing:0.22px;-webkit-text-stroke:0.45px currentColor;left:972px;">1.00 ms</div><div class="t" style="top:729.80px;font-size:10.1px;color:#12b5c9;letter-spacing:0.22px;-webkit-text-stroke:0.45px currentColor;left:1016.8px;">197 ms</div><div class="t" style="top:729.80px;font-size:10.1px;color:#12b5c9;letter-spacing:0.22px;-webkit-text-stroke:0.45px currentColor;left:1061.5px;">0.0 %</div><div class="t" style="top:729.80px;font-size:10.1px;color:#12b5c9;letter-spacing:0.22px;-webkit-text-stroke:0.45px currentColor;left:1107px;">600 ms</div><div class="t" style="top:459.80px;font-size:10.1px;color:#f2a340;letter-spacing:0.22px;-webkit-text-stroke:0.45px currentColor;left:1275.5px;">LFO 1</div><div class="a" style="left:1272px;top:714px;width:102px;height:1px;background:#5b5d60;"></div><div class="a" style="left:0px;top:747px;width:1374px;height:234px;background:#393d40;"></div><div class="a" style="left:0px;top:756px;width:926.5px;height:187.5px;background:#6b6f75;border-radius:5px;"></div><div class="a" style="left:1.5px;top:773px;width:923px;height:168.5px;background:#50545b;border-radius:0 0 4px 4px;"></div><div class="t" style="top:757.80px;font-size:10.1px;color:#e8e9ea;letter-spacing:0.22px;-webkit-text-stroke:0.45px currentColor;left:35.5px;">Wavetable</div><div class="a" style="left:2px;top:773px;width:231px;height:95px;background:#1f2021;"></div><div class="a" style="left:6.5px;top:780px;width:9px;height:8px;background:#f2a340;"></div><div class="a" style="left:52px;top:779px;width:14px;height:10px;background:#17b5c8;"></div><div class="t" style="top:777.00px;font-size:10px;color:#101820;font-weight:700;left:-41px;width:200px;text-align:center;">12</div><div class="t" style="top:777.30px;font-size:10.1px;color:#f2a340;letter-spacing:0.22px;-webkit-text-stroke:0.45px currentColor;left:73px;">Clean</div><div class="a" style="left:118px;top:779px;width:1px;height:10px;background:#55575a;"></div><div class="a" style="left:125px;top:779px;width:10px;height:10px;box-shadow:inset 0 0 0 1px #f2a340;"></div><div class="a" style="left:171px;top:779px;width:14px;height:10px;background:#a9abae;"></div><div class="t" style="top:777.00px;font-size:10px;color:#2a2b2e;font-weight:700;left:78px;width:200px;text-align:center;">12</div><div class="t" style="top:777.30px;font-size:10.1px;color:#b3b5b8;letter-spacing:0.22px;-webkit-text-stroke:0.45px currentColor;left:192px;">Clean</div><div class="t" style="top:838.50px;font-size:9.5px;color:#2a2b2e;-webkit-text-stroke:0.45px currentColor;left:-92px;width:200px;text-align:center;">2</div><div class="t" style="top:838.50px;font-size:9px;color:#f2a340;-webkit-text-stroke:0.45px currentColor;left:126.69999999999999px;width:200px;text-align:center;">1</div><div class="a" style="left:2px;top:852px;width:231px;height:1px;background:#55575a;"></div><div class="t" style="top:853.80px;font-size:10.1px;color:#b3b5b8;letter-spacing:0.22px;-webkit-text-stroke:0.45px currentColor;left:31.5px;">Serial</div><div class="t" style="top:870.80px;font-size:10.1px;color:#e4e5e7;letter-spacing:0.22px;-webkit-text-stroke:0.45px currentColor;left:9.5px;">Res</div><div class="t" style="top:870.80px;font-size:10.1px;color:#e4e5e7;letter-spacing:0.22px;-webkit-text-stroke:0.45px currentColor;left:54.5px;">Frequency</div><div class="t" style="top:870.80px;font-size:10.1px;color:#e4e5e7;letter-spacing:0.22px;-webkit-text-stroke:0.45px currentColor;left:128.5px;">Frequency</div><div class="t" style="top:870.80px;font-size:10.1px;color:#e4e5e7;letter-spacing:0.22px;-webkit-text-stroke:0.45px currentColor;left:185px;">Res</div><div class="a" style="left:116.5px;top:873px;width:1px;height:65px;background:#3a3c3f;"></div><div class="t" style="top:896.80px;font-size:10.1px;color:#eeeff0;letter-spacing:0.22px;-webkit-text-stroke:0.45px currentColor;left:-64.5px;width:200px;text-align:center;">0.0 %</div><div class="t" style="top:921.80px;font-size:10.1px;color:#eeeff0;letter-spacing:0.22px;-webkit-text-stroke:0.45px currentColor;left:-20px;width:200px;text-align:center;">20.5 kHz</div><div class="t" style="top:921.80px;font-size:10.1px;color:#eeeff0;letter-spacing:0.22px;-webkit-text-stroke:0.45px currentColor;left:54px;width:200px;text-align:center;">20.0 Hz</div><div class="t" style="top:896.80px;font-size:10.1px;color:#eeeff0;letter-spacing:0.22px;-webkit-text-stroke:0.45px currentColor;left:110px;width:200px;text-align:center;">0.0 %</div><div class="a" style="left:236px;top:773px;width:624px;height:169px;background:#1f2021;border-radius:3px;"></div><div class="t" style="top:778.30px;font-size:10.1px;color:#b3b5b8;letter-spacing:0.22px;-webkit-text-stroke:0.45px currentColor;left:244px;">Target</div><div class="t" style="top:776.30px;font-size:10.1px;color:#12b5c9;letter-spacing:0.22px;-webkit-text-stroke:0.45px currentColor;left:238px;width:200px;text-align:center;">Amp</div><div class="a" style="left:318.5px;top:791px;width:19px;height:1.2px;background:#1a9aaa;"></div><div class="a" style="left:338.5px;top:791px;width:19px;height:1.2px;background:#1a9aaa;"></div><div class="t" style="top:776.30px;font-size:10.1px;color:#12b5c9;letter-spacing:0.22px;-webkit-text-stroke:0.45px currentColor;left:278px;width:200px;text-align:center;">Env 2</div><div class="a" style="left:358.5px;top:791px;width:19px;height:1.2px;background:#1a9aaa;"></div><div class="a" style="left:378.5px;top:791px;width:19px;height:1.2px;background:#1a9aaa;"></div><div class="t" style="top:776.30px;font-size:10.1px;color:#12b5c9;letter-spacing:0.22px;-webkit-text-stroke:0.45px currentColor;left:318px;width:200px;text-align:center;">Env 3</div><div class="a" style="left:398.5px;top:791px;width:19px;height:1.2px;background:#1a9aaa;"></div><div class="a" style="left:418.5px;top:791px;width:19px;height:1.2px;background:#1a9aaa;"></div><div class="t" style="top:776.30px;font-size:10.1px;color:#f2a340;letter-spacing:0.22px;-webkit-text-stroke:0.45px currentColor;left:358px;width:200px;text-align:center;">LFO 1</div><div class="a" style="left:438.5px;top:791px;width:19px;height:1.2px;background:#c07e3c;"></div><div class="a" style="left:458.5px;top:791px;width:19px;height:1.2px;background:#c07e3c;"></div><div class="t" style="top:776.30px;font-size:10.1px;color:#f2a340;letter-spacing:0.22px;-webkit-text-stroke:0.45px currentColor;left:398px;width:200px;text-align:center;">LFO 2</div><div class="a" style="left:478.5px;top:791px;width:19px;height:1.2px;background:#c07e3c;"></div><div class="a" style="left:498.5px;top:791px;width:19px;height:1.2px;background:#c07e3c;"></div><div class="t" style="top:776.30px;font-size:10.1px;color:#22e222;letter-spacing:0.22px;-webkit-text-stroke:0.45px currentColor;left:438px;width:200px;text-align:center;">Vel</div><div class="a" style="left:518.5px;top:791px;width:19px;height:1.2px;background:#22b822;"></div><div class="a" style="left:538.5px;top:791px;width:19px;height:1.2px;background:#22b822;"></div><div class="t" style="top:776.30px;font-size:10.1px;color:#22e222;letter-spacing:0.22px;-webkit-text-stroke:0.45px currentColor;left:478px;width:200px;text-align:center;">Key</div><div class="a" style="left:558.5px;top:791px;width:19px;height:1.2px;background:#22b822;"></div><div class="a" style="left:578.5px;top:791px;width:19px;height:1.2px;background:#22b822;"></div><div class="t" style="top:776.30px;font-size:10.1px;color:#22e222;letter-spacing:0.22px;-webkit-text-stroke:0.45px currentColor;left:518px;width:200px;text-align:center;">PB</div><div class="a" style="left:598.5px;top:791px;width:19px;height:1.2px;background:#22b822;"></div><div class="a" style="left:618.5px;top:791px;width:19px;height:1.2px;background:#22b822;"></div><div class="t" style="top:776.30px;font-size:10.1px;color:#22e222;letter-spacing:0.22px;-webkit-text-stroke:0.45px currentColor;left:558px;width:200px;text-align:center;">Press</div><div class="a" style="left:638.5px;top:791px;width:19px;height:1.2px;background:#22b822;"></div><div class="a" style="left:658.5px;top:791px;width:19px;height:1.2px;background:#22b822;"></div><div class="t" style="top:776.30px;font-size:10.1px;color:#22e222;letter-spacing:0.22px;-webkit-text-stroke:0.45px currentColor;left:598px;width:200px;text-align:center;">Mod</div><div class="a" style="left:678.5px;top:791px;width:19px;height:1.2px;background:#22b822;"></div><div class="a" style="left:698.5px;top:791px;width:19px;height:1.2px;background:#22b822;"></div><div class="t" style="top:776.30px;font-size:10.1px;color:#22e222;letter-spacing:0.22px;-webkit-text-stroke:0.45px currentColor;left:638px;width:200px;text-align:center;">Rand</div><div class="a" style="left:718.5px;top:791px;width:19px;height:1.2px;background:#22b822;"></div><div class="a" style="left:738.5px;top:791px;width:19px;height:1.2px;background:#22b822;"></div><div class="t" style="top:776.30px;font-size:10.1px;color:#22e222;letter-spacing:0.22px;-webkit-text-stroke:0.45px currentColor;left:678px;width:200px;text-align:center;">Note PB</div><div class="a" style="left:758.5px;top:791px;width:19px;height:1.2px;background:#22b822;"></div><div class="a" style="left:778.5px;top:791px;width:19px;height:1.2px;background:#22b822;"></div><div class="t" style="top:776.30px;font-size:10.1px;color:#22e222;letter-spacing:0.22px;-webkit-text-stroke:0.45px currentColor;left:718px;width:200px;text-align:center;">Slide</div><div class="a" style="left:798.5px;top:791px;width:19px;height:1.2px;background:#22b822;"></div><div class="a" style="left:818.5px;top:791px;width:19px;height:1.2px;background:#22b822;"></div><div class="a" style="left:239px;top:794px;width:79px;height:18px;background:#252629;"></div><div class="a" style="left:239px;top:794px;width:47px;height:18px;background:#36373a;"></div><div class="t" style="top:796.30px;font-size:10.1px;color:#a9abae;letter-spacing:0.22px;-webkit-text-stroke:0.45px currentColor;left:242.5px;">Amp</div><div class="a" style="left:319px;top:794px;width:38px;height:18px;background:#4a4d51;"></div><div class="a" style="left:359px;top:794px;width:38px;height:18px;background:#4a4d51;"></div><div class="a" style="left:399px;top:794px;width:38px;height:18px;background:#4a4d51;"></div><div class="a" style="left:439px;top:794px;width:38px;height:18px;background:#4a4d51;"></div><div class="a" style="left:479px;top:794px;width:38px;height:18px;background:#4a4d51;"></div><div class="a" style="left:519px;top:810px;width:38px;height:2px;background:#1a3a1c;"></div><div class="a" style="left:538px;top:810px;width:10px;height:2px;background:#22e222;"></div><div class="t" style="top:795.90px;font-size:10.1px;color:#22e222;letter-spacing:0.22px;-webkit-text-stroke:0.45px currentColor;left:438px;width:200px;text-align:center;">50</div><div class="a" style="left:559px;top:794px;width:38px;height:18px;background:#4a4d51;"></div><div class="a" style="left:599px;top:810px;width:38px;height:2px;background:#1a3a1c;"></div><div class="a" style="left:618px;top:810px;width:19px;height:2px;background:#22e222;"></div><div class="t" style="top:795.90px;font-size:10.1px;color:#22e222;letter-spacing:0.22px;-webkit-text-stroke:0.45px currentColor;left:518px;width:200px;text-align:center;">100</div><div class="a" style="left:639px;top:794px;width:38px;height:18px;background:#4a4d51;"></div><div class="a" style="left:679px;top:794px;width:38px;height:18px;background:#4a4d51;"></div><div class="a" style="left:719px;top:794px;width:38px;height:18px;background:#4a4d51;"></div><div class="a" style="left:759px;top:810px;width:38px;height:2px;background:#1a3a1c;"></div><div class="a" style="left:778px;top:810px;width:19px;height:2px;background:#22e222;"></div><div class="t" style="top:795.90px;font-size:10.1px;color:#22e222;letter-spacing:0.22px;-webkit-text-stroke:0.45px currentColor;left:678px;width:200px;text-align:center;">100</div><div class="a" style="left:799px;top:794px;width:38px;height:18px;background:#4a4d51;"></div><div class="a" style="left:239px;top:813px;width:79px;height:18px;background:#252629;"></div><div class="a" style="left:239px;top:813px;width:39px;height:18px;background:#36373a;"></div><div class="t" style="top:815.30px;font-size:10.1px;color:#f4f4f4;letter-spacing:0.22px;font-weight:700;left:242.5px;">Pitch</div><div class="a" style="left:319px;top:813px;width:38px;height:18px;background:#5e6165;"></div><div class="a" style="left:359px;top:813px;width:38px;height:18px;background:#5e6165;"></div><div class="a" style="left:399px;top:813px;width:38px;height:18px;background:#5e6165;"></div><div class="a" style="left:439px;top:813px;width:38px;height:18px;background:#5e6165;"></div><div class="a" style="left:479px;top:813px;width:38px;height:18px;background:#5e6165;"></div><div class="a" style="left:519px;top:813px;width:38px;height:18px;background:#5e6165;"></div><div class="a" style="left:559px;top:813px;width:38px;height:18px;background:#5e6165;"></div><div class="a" style="left:599px;top:829px;width:38px;height:2px;background:#1a3a1c;"></div><div class="a" style="left:618px;top:829px;width:19px;height:2px;background:#22e222;"></div><div class="t" style="top:814.90px;font-size:10.1px;color:#22e222;letter-spacing:0.22px;-webkit-text-stroke:0.45px currentColor;left:518px;width:200px;text-align:center;">48</div><div class="a" style="left:639px;top:813px;width:38px;height:18px;background:#5e6165;"></div><div class="a" style="left:679px;top:813px;width:38px;height:18px;background:#5e6165;"></div><div class="a" style="left:719px;top:813px;width:38px;height:18px;background:#5e6165;"></div><div class="a" style="left:759px;top:829px;width:38px;height:2px;background:#1a3a1c;"></div><div class="a" style="left:778px;top:829px;width:19px;height:2px;background:#22e222;"></div><div class="t" style="top:814.90px;font-size:10.1px;color:#22e222;letter-spacing:0.22px;-webkit-text-stroke:0.45px currentColor;left:678px;width:200px;text-align:center;">48</div><div class="a" style="left:799px;top:813px;width:38px;height:18px;background:#5e6165;"></div><div class="a" style="left:239px;top:832px;width:79px;height:18px;background:#252629;"></div><div class="t" style="top:834.30px;font-size:10.1px;color:#a9abae;letter-spacing:0.22px;-webkit-text-stroke:0.45px currentColor;left:242.5px;">Osc 1 Pos</div><div class="a" style="left:319px;top:832px;width:38px;height:18px;background:#4a4d51;"></div><div class="a" style="left:359px;top:832px;width:38px;height:18px;background:#4a4d51;"></div><div class="a" style="left:399px;top:832px;width:38px;height:18px;background:#4a4d51;"></div><div class="a" style="left:439px;top:832px;width:38px;height:18px;background:#4a4d51;"></div><div class="a" style="left:479px;top:832px;width:38px;height:18px;background:#4a4d51;"></div><div class="a" style="left:519px;top:832px;width:38px;height:18px;background:#4a4d51;"></div><div class="a" style="left:559px;top:832px;width:38px;height:18px;background:#4a4d51;"></div><div class="a" style="left:599px;top:848px;width:38px;height:2px;background:#1a3a1c;"></div><div class="a" style="left:618px;top:848px;width:19px;height:2px;background:#22e222;"></div><div class="t" style="top:833.90px;font-size:10.1px;color:#22e222;letter-spacing:0.22px;-webkit-text-stroke:0.45px currentColor;left:518px;width:200px;text-align:center;">100</div><div class="a" style="left:639px;top:832px;width:38px;height:18px;background:#4a4d51;"></div><div class="a" style="left:679px;top:848px;width:38px;height:2px;background:#1a3a1c;"></div><div class="a" style="left:698px;top:848px;width:19px;height:2px;background:#22e222;"></div><div class="t" style="top:833.90px;font-size:10.1px;color:#22e222;letter-spacing:0.22px;-webkit-text-stroke:0.45px currentColor;left:598px;width:200px;text-align:center;">100</div><div class="a" style="left:719px;top:832px;width:38px;height:18px;background:#4a4d51;"></div><div class="a" style="left:759px;top:848px;width:38px;height:2px;background:#1a3a1c;"></div><div class="a" style="left:778px;top:848px;width:19px;height:2px;background:#22e222;"></div><div class="t" style="top:833.90px;font-size:10.1px;color:#22e222;letter-spacing:0.22px;-webkit-text-stroke:0.45px currentColor;left:678px;width:200px;text-align:center;">100</div><div class="a" style="left:799px;top:848px;width:38px;height:2px;background:#1a3a1c;"></div><div class="a" style="left:818px;top:848px;width:7px;height:2px;background:#22e222;"></div><div class="t" style="top:833.90px;font-size:10.1px;color:#22e222;letter-spacing:0.22px;-webkit-text-stroke:0.45px currentColor;left:718px;width:200px;text-align:center;">33</div><div class="a" style="left:239px;top:851px;width:79px;height:18px;background:#252629;"></div><div class="a" style="left:239px;top:851px;width:39px;height:18px;background:#36373a;"></div><div class="t" style="top:853.30px;font-size:10.1px;color:#a9abae;letter-spacing:0.22px;-webkit-text-stroke:0.45px currentColor;left:242.5px;">Osc 1 Warp</div><div class="a" style="left:319px;top:851px;width:38px;height:18px;background:#4a4d51;"></div><div class="a" style="left:359px;top:851px;width:38px;height:18px;background:#4a4d51;"></div><div class="a" style="left:399px;top:851px;width:38px;height:18px;background:#4a4d51;"></div><div class="a" style="left:439px;top:851px;width:38px;height:18px;background:#4a4d51;"></div><div class="a" style="left:479px;top:851px;width:38px;height:18px;background:#4a4d51;"></div><div class="a" style="left:519px;top:851px;width:38px;height:18px;background:#4a4d51;"></div><div class="a" style="left:559px;top:851px;width:38px;height:18px;background:#4a4d51;"></div><div class="a" style="left:599px;top:867px;width:38px;height:2px;background:#1a3a1c;"></div><div class="a" style="left:618px;top:867px;width:19px;height:2px;background:#22e222;"></div><div class="t" style="top:852.90px;font-size:10.1px;color:#22e222;letter-spacing:0.22px;-webkit-text-stroke:0.45px currentColor;left:518px;width:200px;text-align:center;">100</div><div class="a" style="left:639px;top:867px;width:38px;height:2px;background:#1a3a1c;"></div><div class="a" style="left:658px;top:867px;width:1px;height:2px;background:#22e222;"></div><div class="t" style="top:852.90px;font-size:10.1px;color:#22e222;letter-spacing:0.22px;-webkit-text-stroke:0.45px currentColor;left:558px;width:200px;text-align:center;">7.0</div><div class="a" style="left:679px;top:851px;width:38px;height:18px;background:#4a4d51;"></div><div class="a" style="left:719px;top:851px;width:38px;height:18px;background:#4a4d51;"></div><div class="a" style="left:759px;top:867px;width:38px;height:2px;background:#1a3a1c;"></div><div class="a" style="left:778px;top:867px;width:19px;height:2px;background:#22e222;"></div><div class="t" style="top:852.90px;font-size:10.1px;color:#22e222;letter-spacing:0.22px;-webkit-text-stroke:0.45px currentColor;left:678px;width:200px;text-align:center;">100</div><div class="a" style="left:799px;top:851px;width:38px;height:18px;background:#4a4d51;"></div><div class="t" style="top:923.80px;font-size:10.1px;color:#b3b5b8;letter-spacing:0.22px;-webkit-text-stroke:0.45px currentColor;left:243.5px;">Global</div><div class="t" style="top:923.80px;font-size:10.1px;color:#9a9ca0;letter-spacing:0.22px;-webkit-text-stroke:0.45px currentColor;left:692.5px;">Time</div><div class="t" style="top:923.80px;font-size:10.1px;color:#eeeff0;letter-spacing:0.22px;-webkit-text-stroke:0.45px currentColor;left:721px;">0.0 %</div><div class="t" style="top:923.80px;font-size:10.1px;color:#9a9ca0;letter-spacing:0.22px;-webkit-text-stroke:0.45px currentColor;left:768px;">Amount</div><div class="t" style="top:923.80px;font-size:10.1px;color:#eeeff0;letter-spacing:0.22px;-webkit-text-stroke:0.45px currentColor;left:814px;">100 %</div><div class="a" style="left:863px;top:773px;width:61px;height:169px;background:#50545b;box-shadow:inset 0 0 0 1px #62666b;border-radius:4px;"></div><div class="t" style="top:775.80px;font-size:10.1px;color:#eeeff0;letter-spacing:0.22px;-webkit-text-stroke:0.45px currentColor;left:865.5px;">Volume</div><div class="a" style="left:865.5px;top:789px;width:56px;height:13px;background:#2a2c2f;"></div><div class="a" style="left:866.5px;top:790px;width:32px;height:11px;background:#137d8c;"></div><div class="t" style="top:788.80px;font-size:10.1px;color:#e8f4f6;letter-spacing:0.22px;-webkit-text-stroke:0.45px currentColor;left:793.5px;width:200px;text-align:center;">-9.0 dB</div><div class="a" style="left:865px;top:804px;width:57px;height:1px;background:#45484c;"></div><div class="a" style="left:865.5px;top:810px;width:30px;height:12px;background:#07c0d3;box-shadow:inset 0 0 0 1px #0c3940;"></div><div class="t" style="top:809.30px;font-size:10.1px;color:#0e2a30;letter-spacing:0.22px;-webkit-text-stroke:0.45px currentColor;left:780.5px;width:200px;text-align:center;">Mono</div><div class="a" style="left:900px;top:810px;width:21px;height:12px;background:#2a2c2f;"></div><div class="t" style="top:809.30px;font-size:10.1px;color:#c8cacc;letter-spacing:0.22px;-webkit-text-stroke:0.45px currentColor;left:806px;width:200px;text-align:center;">8</div><div class="t" style="top:822.80px;font-size:10.1px;color:#eeeff0;letter-spacing:0.22px;-webkit-text-stroke:0.45px currentColor;left:865.5px;">Glide</div><div class="a" style="left:865.5px;top:836px;width:56px;height:13px;background:#2a2c2f;"></div><div class="t" style="top:835.80px;font-size:10.1px;color:#d8d9db;letter-spacing:0.22px;-webkit-text-stroke:0.45px currentColor;left:793.5px;width:200px;text-align:center;">0.00 ms</div><div class="a" style="left:865px;top:854px;width:57px;height:1px;background:#45484c;"></div><div class="t" style="top:857.80px;font-size:10.1px;color:#eeeff0;letter-spacing:0.22px;-webkit-text-stroke:0.45px currentColor;left:865.5px;">Unison</div><div class="a" style="left:865.5px;top:871.5px;width:56px;height:12.5px;background:#2a2c2f;"></div><div class="t" style="top:870.80px;font-size:10.1px;color:#d8d9db;letter-spacing:0.22px;-webkit-text-stroke:0.45px currentColor;left:867.5px;">None</div><div class="t" style="top:883.80px;font-size:10.1px;color:#eeeff0;letter-spacing:0.22px;-webkit-text-stroke:0.45px currentColor;left:865.5px;">Voices</div><div class="a" style="left:865.5px;top:897.5px;width:56px;height:12.5px;background:#4a4d52;box-shadow:inset 0 0 0 1px #1c1d1f;"></div><div class="t" style="top:896.80px;font-size:10.1px;color:#d8d9db;letter-spacing:0.22px;-webkit-text-stroke:0.45px currentColor;left:793.5px;width:200px;text-align:center;">3</div><div class="t" style="top:909.80px;font-size:10.1px;color:#eeeff0;letter-spacing:0.22px;-webkit-text-stroke:0.45px currentColor;left:865.5px;">Amount</div><div class="a" style="left:865.5px;top:923.5px;width:56px;height:12.5px;background:#4a4d52;box-shadow:inset 0 0 0 1px #1c1d1f;"></div><div class="t" style="top:922.80px;font-size:10.1px;color:#d8d9db;letter-spacing:0.22px;-webkit-text-stroke:0.45px currentColor;left:793.5px;width:200px;text-align:center;">30 %</div><div class="a" style="left:928.5px;top:796px;width:1.5px;height:108px;background:#2a2c2f;"></div><div class="a" style="left:932.5px;top:796px;width:1.5px;height:108px;background:#2a2c2f;"></div><div class="a" style="left:928.5px;top:806.5px;width:5.5px;height:1px;background:#6a6e73;"></div><div class="a" style="left:935.5px;top:756px;width:438.5px;height:187.5px;background:#50545b;border-radius:5px 0 0 5px;"></div><div class="a" style="left:936px;top:756px;width:438px;height:17px;background:#5a8296;border-radius:5px 0 0 0;"></div><div class="t" style="top:758.10px;font-size:10.1px;color:#1d2226;letter-spacing:0.22px;-webkit-text-stroke:0.45px currentColor;left:972.5px;">A Bit Warmer</div><div class="a" style="left:940.5px;top:777px;width:218px;height:108px;background:#1f2021;border-radius:3px;"></div><div class="a" style="left:944px;top:781.5px;width:105px;height:12.5px;background:#07c0d3;"></div><div class="t" style="top:781.00px;font-size:10.1px;color:#0e2a30;letter-spacing:0.22px;-webkit-text-stroke:0.45px currentColor;left:946px;">Sinoid Fold</div><div class="a" style="left:944px;top:798px;width:211px;height:67px;box-shadow:inset 0 0 0 1px #505256;"></div><div class="a" style="left:1048.5px;top:798px;width:1px;height:67px;background:#505256;"></div><div class="a" style="left:944px;top:831.3px;width:211px;height:1px;background:#505256;"></div><div class="t" style="top:868.80px;font-size:10.1px;color:#12b5c9;letter-spacing:0.22px;-webkit-text-stroke:0.45px currentColor;left:957.5px;">No Clip</div><div class="a" style="left:1028.5px;top:869.5px;width:41px;height:12px;box-shadow:inset 0 0 0 1px #f2a340;"></div><div class="t" style="top:868.80px;font-size:10.1px;color:#f2a340;letter-spacing:0.22px;-webkit-text-stroke:0.45px currentColor;left:949px;width:200px;text-align:center;">Color</div><div class="t" style="top:868.80px;font-size:10.1px;color:#b3b5b8;letter-spacing:0.22px;-webkit-text-stroke:0.45px currentColor;left:1081.5px;">Amt Lo</div><div class="t" style="top:868.80px;font-size:10.1px;color:#b3b5b8;letter-spacing:0.22px;-webkit-text-stroke:0.45px currentColor;left:1119.5px;">0.0 %</div><div class="a" style="left:1163px;top:777px;width:211px;height:108px;background:#1f2021;border-radius:3px 0 0 3px;"></div><div class="t" style="top:780.60px;font-size:10.1px;color:#b3b5b8;letter-spacing:0.22px;-webkit-text-stroke:0.45px currentColor;left:1168px;">Color Curve</div><div class="a" style="left:1353.5px;top:787px;width:10px;height:2px;background:#b3b5b8;"></div><div class="t" style="top:780.60px;font-size:10.1px;color:#b3b5b8;letter-spacing:0.22px;-webkit-text-stroke:0.45px currentColor;left:1366px;">In</div><div class="a" style="left:1167px;top:798px;width:207px;height:67px;box-shadow:inset 0 0 0 1px #505256;"></div><div class="a" style="left:1224.5px;top:798px;width:1px;height:67px;background:#505256;"></div><div class="a" style="left:1309px;top:798px;width:1px;height:67px;background:#505256;"></div><div class="t" style="top:824.60px;font-size:9px;color:#2a2b2e;-webkit-text-stroke:0.45px currentColor;left:1083.7px;width:200px;text-align:center;">1</div><div class="t" style="top:834.80px;font-size:9px;color:#d8d9db;-webkit-text-stroke:0.45px currentColor;left:1174.3px;width:200px;text-align:center;">2</div><div class="t" style="top:868.80px;font-size:10.1px;color:#b3b5b8;letter-spacing:0.22px;-webkit-text-stroke:0.45px currentColor;left:1168px;">Amt Hi</div><div class="t" style="top:868.80px;font-size:10.1px;color:#b3b5b8;letter-spacing:0.22px;-webkit-text-stroke:0.45px currentColor;left:1203.5px;">-39 %</div><div class="t" style="top:868.80px;font-size:10.1px;color:#b3b5b8;letter-spacing:0.22px;-webkit-text-stroke:0.45px currentColor;left:1246.5px;">Frequency</div><div class="t" style="top:868.80px;font-size:10.1px;color:#b3b5b8;letter-spacing:0.22px;-webkit-text-stroke:0.45px currentColor;left:1301px;">461 Hz</div><div class="t" style="top:868.80px;font-size:10.1px;color:#b3b5b8;letter-spacing:0.22px;-webkit-text-stroke:0.45px currentColor;left:1353.5px;">Width</div><div class="t" style="top:889.80px;font-size:10.1px;color:#eeeff0;letter-spacing:0.22px;-webkit-text-stroke:0.45px currentColor;left:880.9px;width:200px;text-align:center;">Drive</div><div class="t" style="top:925.80px;font-size:10.1px;color:#eeeff0;letter-spacing:0.22px;-webkit-text-stroke:0.45px currentColor;left:880.9px;width:200px;text-align:center;">6.2 dB</div><div class="t" style="top:889.80px;font-size:10.1px;color:#eeeff0;letter-spacing:0.22px;-webkit-text-stroke:0.45px currentColor;left:949px;width:200px;text-align:center;">Output</div><div class="t" style="top:925.80px;font-size:10.1px;color:#eeeff0;letter-spacing:0.22px;-webkit-text-stroke:0.45px currentColor;left:949px;width:200px;text-align:center;">0.0 dB</div><div class="t" style="top:889.80px;font-size:10.1px;color:#eeeff0;letter-spacing:0.22px;-webkit-text-stroke:0.45px currentColor;left:1016.8px;width:200px;text-align:center;">Dry/Wet</div><div class="t" style="top:925.80px;font-size:10.1px;color:#eeeff0;letter-spacing:0.22px;-webkit-text-stroke:0.45px currentColor;left:1016.8px;width:200px;text-align:center;">62 %</div><div class="t" style="top:889.80px;font-size:10.1px;color:#eeeff0;letter-spacing:0.22px;font-weight:700;left:1166.5px;">Waveshaper</div><div class="t" style="top:907.80px;font-size:10.1px;color:#eeeff0;letter-spacing:0.22px;-webkit-text-stroke:0.45px currentColor;left:1166.5px;">Drive</div><div class="a" style="left:1200px;top:908.0px;width:40.5px;height:12.5px;background:#55595e;box-shadow:inset 0 0 0 1px #2a2c2f;"></div><div class="t" style="top:907.80px;font-size:10.1px;color:#eeeff0;letter-spacing:0.22px;-webkit-text-stroke:0.45px currentColor;left:1120.25px;width:200px;text-align:center;">100 %</div><div class="t" style="top:925.80px;font-size:10.1px;color:#eeeff0;letter-spacing:0.22px;-webkit-text-stroke:0.45px currentColor;left:1166.5px;">Linear</div><div class="a" style="left:1200px;top:926.0px;width:40.5px;height:12.5px;background:#55595e;box-shadow:inset 0 0 0 1px #2a2c2f;"></div><div class="t" style="top:925.80px;font-size:10.1px;color:#eeeff0;letter-spacing:0.22px;-webkit-text-stroke:0.45px currentColor;left:1120.25px;width:200px;text-align:center;">50 %</div><div class="t" style="top:907.80px;font-size:10.1px;color:#eeeff0;letter-spacing:0.22px;-webkit-text-stroke:0.45px currentColor;left:1256.5px;">Curve</div><div class="a" style="left:1289.5px;top:908.0px;width:40.5px;height:12.5px;background:#55595e;box-shadow:inset 0 0 0 1px #2a2c2f;"></div><div class="t" style="top:907.80px;font-size:10.1px;color:#eeeff0;letter-spacing:0.22px;-webkit-text-stroke:0.45px currentColor;left:1209.75px;width:200px;text-align:center;">5.0 %</div><div class="t" style="top:925.80px;font-size:10.1px;color:#eeeff0;letter-spacing:0.22px;-webkit-text-stroke:0.45px currentColor;left:1256.5px;">Damp</div><div class="a" style="left:1289.5px;top:926.0px;width:40.5px;height:12.5px;background:#55595e;box-shadow:inset 0 0 0 1px #2a2c2f;"></div><div class="t" style="top:925.80px;font-size:10.1px;color:#eeeff0;letter-spacing:0.22px;-webkit-text-stroke:0.45px currentColor;left:1209.75px;width:200px;text-align:center;">0.0 %</div><div class="t" style="top:907.80px;font-size:10.1px;color:#eeeff0;letter-spacing:0.22px;-webkit-text-stroke:0.45px currentColor;left:1345.5px;">Depth</div><div class="t" style="top:925.80px;font-size:10.1px;color:#eeeff0;letter-spacing:0.22px;-webkit-text-stroke:0.45px currentColor;left:1345.5px;">Period</div><div class="a" style="left:33px;top:952px;width:1341px;height:20px;background:#50545a;border-radius:4px 0 0 4px;"></div>
<svg width="1374" height="981" viewBox="0 0 1374 981"><g stroke="#d6d8da" stroke-width="1.1" fill="none"><path d="M5.5 -3 V5.5 H20.5 V-3 M8.5 1.3 H17.5"/><path d="M6 17.5 Q9 14 12.5 16.8 T19.8 16.3"/><path d="M6 23 Q9 19.5 12.5 22.3 T19.8 21.8"/><path d="M13.8 33.5 H19.8 M6.4 35.3 H11 Q12 33.5 14 33.5 M11 35.3 Q12 37.6 14 37.6 H19.8 M13.8 39.4 H19.8 M6.4 41.3 H11 Q12 39.4 14 39.4 M11 41.3 Q12 43.6 14 43.6 H19.8"/><path d="M5.5 52.5 H20.5 V62.6 H5.5 Z M5.5 58.6 H20.5 M9.2 52.5 V58.6"/></g><circle cx="39" cy="74.5" r="6" fill="#3a6fc0" stroke="#1b2540" stroke-width="1.2"/><path d="M35.6 77.5 V74.8 A3.4 3.4 0 0 1 42.4 74.8 V77.5" stroke="#10182a" stroke-width="1.2" fill="none"/><rect x="35" y="74.6" width="2" height="3.2" rx="0.8" fill="#10182a"/><rect x="41" y="74.6" width="2" height="3.2" rx="0.8" fill="#10182a"/><path d="M1187 140 L1191 136 L1195 140 Z" fill="#1fc1d6"/><path d="M137 256.5 L144 253 L144 260 Z" fill="#6d6f72"/><path d="M305 176 L311 176 L308 180 Z" fill="#f2a340"/><path d="M411 176 L417 176 L414 180 Z" fill="#f2a340"/><path d="M1122 177.5 L1127 175 L1127 180 Z" fill="#8a8c8f"/><path d="M1138 177.5 L1133 175 L1133 180 Z" fill="#f2a340"/><g fill="none" stroke="#5a5c5f" stroke-width="1.2"><path d="M245.5 197.8 L691 197.8 L694.5 242 L1139.5 242"/><path d="M245.5 279 L691 257 L694.5 301 L1139.5 279"/><path d="M245.5 338 L469.5 315.5 L918.5 360.3 L1139.5 338"/></g><path d="M245.50,397.00 L249.97,396.30 L254.44,395.60 L258.91,394.90 L263.38,394.21 L267.85,393.51 L272.32,392.82 L276.79,392.14 L281.26,391.45 L285.73,390.78 L290.20,390.11 L294.67,389.45 L299.14,388.79 L303.61,388.14 L308.08,387.51 L312.55,386.88 L317.02,386.26 L321.49,385.65 L325.96,385.05 L330.43,384.47 L334.90,383.89 L339.37,383.33 L343.84,382.79 L348.31,382.25 L352.78,381.73 L357.25,381.23 L361.72,380.74 L366.19,380.27 L370.66,379.82 L375.13,379.38 L379.60,378.96 L384.07,378.56 L388.54,378.17 L393.01,377.81 L397.48,377.46 L401.95,377.13 L406.42,376.82 L410.89,376.53 L415.36,376.27 L419.83,376.02 L424.30,375.79 L428.77,375.59 L433.24,375.40 L437.71,375.24 L442.18,375.09 L446.65,374.97 L451.12,374.88 L455.59,374.80 L460.06,374.74 L464.53,374.71 L469.00,374.70 L473.47,374.71 L477.94,374.74 L482.41,374.80 L486.88,374.88 L491.35,374.97 L495.82,375.09 L500.29,375.24 L504.76,375.40 L509.23,375.59 L513.70,375.79 L518.17,376.02 L522.64,376.27 L527.11,376.53 L531.58,376.82 L536.05,377.13 L540.52,377.46 L544.99,377.81 L549.46,378.17 L553.93,378.56 L558.40,378.96 L562.87,379.38 L567.34,379.82 L571.81,380.27 L576.28,380.74 L580.75,381.23 L585.22,381.73 L589.69,382.25 L594.16,382.79 L598.63,383.33 L603.10,383.89 L607.57,384.47 L612.04,385.05 L616.51,385.65 L620.98,386.26 L625.45,386.88 L629.92,387.51 L634.39,388.14 L638.86,388.79 L643.33,389.45 L647.80,390.11 L652.27,390.78 L656.74,391.45 L661.21,392.14 L665.68,392.82 L670.15,393.51 L674.62,394.21 L679.09,394.90 L683.56,395.60 L688.03,396.30 L692.50,397.00 L696.97,397.70 L701.44,398.40 L705.91,399.10 L710.38,399.79 L714.85,400.49 L719.32,401.18 L723.79,401.86 L728.26,402.55 L732.73,403.22 L737.20,403.89 L741.67,404.55 L746.14,405.21 L750.61,405.86 L755.08,406.49 L759.55,407.12 L764.02,407.74 L768.49,408.35 L772.96,408.95 L777.43,409.53 L781.90,410.11 L786.37,410.67 L790.84,411.21 L795.31,411.75 L799.78,412.27 L804.25,412.77 L808.72,413.26 L813.19,413.73 L817.66,414.18 L822.13,414.62 L826.60,415.04 L831.07,415.44 L835.54,415.83 L840.01,416.19 L844.48,416.54 L848.95,416.87 L853.42,417.18 L857.89,417.47 L862.36,417.73 L866.83,417.98 L871.30,418.21 L875.77,418.41 L880.24,418.60 L884.71,418.76 L889.18,418.91 L893.65,419.03 L898.12,419.12 L902.59,419.20 L907.06,419.26 L911.53,419.29 L916.00,419.30 L920.47,419.29 L924.94,419.26 L929.41,419.20 L933.88,419.12 L938.35,419.03 L942.82,418.91 L947.29,418.76 L951.76,418.60 L956.23,418.41 L960.70,418.21 L965.17,417.98 L969.64,417.73 L974.11,417.47 L978.58,417.18 L983.05,416.87 L987.52,416.54 L991.99,416.19 L996.46,415.83 L1000.93,415.44 L1005.40,415.04 L1009.87,414.62 L1014.34,414.18 L1018.81,413.73 L1023.28,413.26 L1027.75,412.77 L1032.22,412.27 L1036.69,411.75 L1041.16,411.21 L1045.63,410.67 L1050.10,410.11 L1054.57,409.53 L1059.04,408.95 L1063.51,408.35 L1067.98,407.74 L1072.45,407.12 L1076.92,406.49 L1081.39,405.86 L1085.86,405.21 L1090.33,404.55 L1094.80,403.89 L1099.27,403.22 L1103.74,402.55 L1108.21,401.86 L1112.68,401.18 L1117.15,400.49 L1121.62,399.79 L1126.09,399.10 L1130.56,398.40 L1135.03,397.70 L1139.50,397.00" fill="none" stroke="#f2a340" stroke-width="1.6"/><path d="M286 439.5 L291.5 439.5 L288.75 442.5 Z" fill="#f2a340"/><path d="M1303 256.5 L1310 253 L1310 260 Z" fill="#6d6f72"/><path d="M408.5 465.5 L414.5 465.5 L411.5 468.5 Z" fill="#12b5c9"/><g stroke="#12b5c9" stroke-width="1.3" fill="none"><path d="M16.7 524.5 V516.8 H24.7"/><path d="M392.7 516.8 H400.7 V524.5"/><path d="M16.7 647.5 V655.3 H24.7"/><path d="M392.7 655.3 H400.7 V647.5"/></g><path d="M21 652 L31.8 521 L76.3 651 L320.4 651" stroke="#12abbd" stroke-width="1.8" fill="none"/><path d="M23.6 586.3 L25.6 584.0999999999999 L28.0 584.0999999999999 L30.0 586.3 L28.0 588.5 L25.6 588.5 Z" fill="#d4687c"/><ellipse cx="26.8" cy="586.3" rx="1.3" ry="0.9" fill="#1a9aa8"/><path d="M51.4 584.6 L53.4 582.4 L55.800000000000004 582.4 L57.800000000000004 584.6 L55.800000000000004 586.8000000000001 L53.4 586.8000000000001 Z" fill="#d4687c"/><ellipse cx="54.6" cy="584.6" rx="1.3" ry="0.9" fill="#1a9aa8"/><path d="M292.8 651 L294.8 648.8 L297.2 648.8 L299.2 651 L297.2 653.2 L294.8 653.2 Z" fill="#d4687c"/><ellipse cx="296" cy="651" rx="1.3" ry="0.9" fill="#1a9aa8"/><rect x="28.8" y="518" width="6" height="6" fill="none" stroke="#f2a340" stroke-width="1.2"/><rect x="73.3" y="648" width="6" height="6" fill="none" stroke="#f2a340" stroke-width="1.2"/><rect x="317.4" y="648" width="6" height="6" fill="none" stroke="#f2a340" stroke-width="1.2"/><path d="M832.5 465.5 L838.5 465.5 L835.5 468.5 Z" fill="#12b5c9"/><g stroke="#12b5c9" stroke-width="1.3" fill="none"><path d="M440.8 524.5 V516.8 H448.8"/><path d="M816.4 516.8 H824.4 V524.5"/><path d="M440.8 647.5 V655.3 H448.8"/><path d="M816.4 655.3 H824.4 V647.5"/></g><path d="M445 651 L455.2 521 C460 570 480 610 526.5 651 L744 651" stroke="#12abbd" stroke-width="1.8" fill="none"/><path d="M447.6 586.3 L449.6 584.0999999999999 L452.0 584.0999999999999 L454.0 586.3 L452.0 588.5 L449.6 588.5 Z" fill="#d4687c"/><ellipse cx="450.8" cy="586.3" rx="1.3" ry="0.9" fill="#1a9aa8"/><path d="M488.8 616.4 L490.8 614.1999999999999 L493.2 614.1999999999999 L495.2 616.4 L493.2 618.6 L490.8 618.6 Z" fill="#d4687c"/><ellipse cx="492" cy="616.4" rx="1.3" ry="0.9" fill="#1a9aa8"/><path d="M716.8 651 L718.8 648.8 L721.2 648.8 L723.2 651 L721.2 653.2 L718.8 653.2 Z" fill="#d4687c"/><ellipse cx="720" cy="651" rx="1.3" ry="0.9" fill="#1a9aa8"/><rect x="442" y="648" width="6" height="6" fill="none" stroke="#f2a340" stroke-width="1.2"/><rect x="452.2" y="518" width="6" height="6" fill="none" stroke="#f2a340" stroke-width="1.2"/><rect x="523.5" y="648" width="6" height="6" fill="none" stroke="#f2a340" stroke-width="1.2"/><rect x="741" y="648" width="6" height="6" fill="none" stroke="#f2a340" stroke-width="1.2"/><path d="M1256.5 465.5 L1262.5 465.5 L1259.5 468.5 Z" fill="#12b5c9"/><g stroke="#12b5c9" stroke-width="1.3" fill="none"><path d="M864.5 524.5 V516.8 H872.5"/><path d="M1240.5 516.8 H1248.5 V524.5"/><path d="M864.5 647.5 V655.3 H872.5"/><path d="M1240.5 655.3 H1248.5 V647.5"/></g><path d="M869 651 L879.8 521 C880.3 550 893 603.9 918.3 651 L1168.4 651" stroke="#12abbd" stroke-width="1.8" fill="none"/><path d="M871.6999999999999 586.5 L873.6999999999999 584.3 L876.1 584.3 L878.1 586.5 L876.1 588.7 L873.6999999999999 588.7 Z" fill="#d4687c"/><ellipse cx="874.9" cy="586.5" rx="1.3" ry="0.9" fill="#1a9aa8"/><path d="M898.0 615.5 L900.0 613.3 L902.4000000000001 613.3 L904.4000000000001 615.5 L902.4000000000001 617.7 L900.0 617.7 Z" fill="#d4687c"/><ellipse cx="901.2" cy="615.5" rx="1.3" ry="0.9" fill="#1a9aa8"/><path d="M1140.8 651 L1142.8 648.8 L1145.2 648.8 L1147.2 651 L1145.2 653.2 L1142.8 653.2 Z" fill="#d4687c"/><ellipse cx="1144" cy="651" rx="1.3" ry="0.9" fill="#1a9aa8"/><rect x="866.4" y="648" width="6" height="6" fill="none" stroke="#f2a340" stroke-width="1.2"/><rect x="876.8" y="518" width="6" height="6" fill="none" stroke="#f2a340" stroke-width="1.2"/><rect x="915.3" y="648" width="6" height="6" fill="none" stroke="#f2a340" stroke-width="1.2"/><rect x="1165.4" y="648" width="6" height="6" fill="none" stroke="#f2a340" stroke-width="1.2"/><path d="M1297.8,585.5 L1298.8,582.8 L1299.7,580.1 L1300.7,577.4 L1301.6,574.8 L1302.6,572.1 L1303.5,569.5 L1304.5,566.9 L1305.4,564.3 L1306.4,561.7 L1307.3,559.2 L1308.3,556.8 L1309.2,554.3 L1310.2,552.0 L1311.1,549.6 L1312.1,547.4 L1313.0,545.2 L1314.0,543.0 L1314.9,540.9 L1315.9,538.9 L1316.8,537.0 L1317.8,535.1 L1318.8,533.3 L1319.7,531.6 L1320.7,529.9 L1321.6,528.4 L1322.6,526.9 L1323.5,525.6 L1324.5,524.3 L1325.4,523.1 L1326.4,522.0 L1327.3,521.0 L1328.3,520.1 L1329.2,519.3 L1330.2,518.7 L1331.1,518.1 L1332.1,517.6 L1333.0,517.2 L1334.0,516.9 L1334.9,516.8 L1335.9,516.7 L1336.9,516.7 L1337.8,516.9 L1338.8,517.1 L1339.7,517.5 L1340.7,518.0 L1341.6,518.5 L1342.6,519.2 L1343.5,520.0 L1344.5,520.8 L1345.4,521.8 L1346.4,522.9 L1347.3,524.0 L1348.3,525.3 L1349.2,526.6 L1350.2,528.1 L1351.1,529.6 L1352.1,531.2 L1353.0,532.9 L1354.0,534.7 L1355.0,536.6 L1355.9,538.5 L1356.9,540.5 L1357.8,542.6 L1358.8,544.7 L1359.7,546.9 L1360.7,549.2 L1361.6,551.5 L1362.6,553.8 L1363.5,556.3 L1364.5,558.7 L1365.4,561.2 L1366.4,563.8 L1367.3,566.3 L1368.3,568.9 L1369.2,571.6 L1370.2,574.2 L1371.1,576.9 L1372.1,579.6 L1373.0,582.2 L1374.0,584.9" fill="none" stroke="#f2a340" stroke-width="1.6"/><circle cx="9" cy="764.5" r="6" fill="#f2a340" stroke="#2a2b2e" stroke-width="1"/><circle cx="25.3" cy="764.5" r="6" fill="#3d3f43" stroke="#222" stroke-width="1"/><path d="M21.8 767.5 L25.3 761 L28.8 767.5 Z" fill="#e8e8e8"/><path d="M23 780.3 H33.5 Q35.5 780.3 35.5 782.5 V786.5" stroke="#f2a340" stroke-width="1.2" fill="none"/><path d="M39 783.5 L45 783.5 L42 787 Z" fill="#f2a340"/><path d="M101.5 783 L107 783 L104.25 786 Z" fill="#f2a340"/><path d="M141.5 788 Q141.5 781.5 147 781.5 H156" stroke="#b3b5b8" stroke-width="1.2" fill="none"/><path d="M158 783.5 L164 783.5 L161 787 Z" fill="#b3b5b8"/><path d="M220.5 783 L226 783 L223.25 786 Z" fill="#b3b5b8"/><path d="M2 821 L210 821 Q228 821.5 233 833" stroke="#12b5c9" stroke-width="1.6" fill="none"/><circle cx="8" cy="845.5" r="6.3" fill="#b3b5b8"/><circle cx="226.7" cy="845.5" r="5.8" fill="#1f2021" stroke="#f2a340" stroke-width="1.3"/><path d="M8.5 860.5 H12 M15 860.5 H18 M21 860.5 H24.5" stroke="#b3b5b8" stroke-width="1"/><circle cx="13.5" cy="860.5" r="1.6" fill="none" stroke="#b3b5b8" stroke-width="0.9"/><circle cx="19.5" cy="860.5" r="1.6" fill="none" stroke="#b3b5b8" stroke-width="0.9"/><path d="M68.3 859.3 L74.3 859.3 L71.3 862.3 Z" fill="#b3b5b8"/><path d="M16.00 903.31 A8.2 8.2 0 1 1 26.98 895.03" stroke="#1f2023" stroke-width="2.2" fill="none"/><path d="M18.8 895.1 V904.1" stroke="#1f2023" stroke-width="2.2"/><path d="M70.83 917.57 A17.3 17.3 0 1 1 89.17 917.57" stroke="#1f2023" stroke-width="2.5" fill="none"/><path d="M70.83 917.57 A17.3 17.3 0 1 1 89.17 917.57" stroke="#07c0d3" stroke-width="2.5" fill="none"/><path d="M82.75 907.30 L89.57 918.21" stroke="#1f2023" stroke-width="2.5"/><path d="M145.04 917.40 A17.1 17.1 0 1 1 163.16 917.40" stroke="#3a3d41" stroke-width="2.3" fill="none"/><path d="M151.38 907.25 L144.67 917.99" stroke="#3a3d41" stroke-width="2.3"/><path d="M191.00 903.31 A8.2 8.2 0 1 1 201.98 895.03" stroke="#3a3d41" stroke-width="2.2" fill="none"/><path d="M193.8 895.1 V904.1" stroke="#3a3d41" stroke-width="2.2"/><path d="M912.5 813.5 L918.5 813.5 L915.5 818.5 Z" fill="#c8cacc"/><path d="M911.5 875 L918.5 875 L915 880 Z" fill="#d8d9db"/><circle cx="901.1" cy="764.4" r="6.2" fill="#2f3236" stroke="#1c1e20" stroke-width="1.2"/><path d="M896.3 764.4 L898.6 762.9 L898.6 765.9 Z M905.9 764.4 L903.6 762.9 L903.6 765.9 Z" fill="#e6e6e6"/><path d="M898.6 764.4 H899.5 L902 761.2 M903.6 764.4 H902.7 L900.2 767.6" stroke="#d8d8d8" stroke-width="1.1" fill="none"/><circle cx="917" cy="764.4" r="6.2" fill="#2f3236" stroke="#1c1e20" stroke-width="1.2"/><path d="M913.2 761 H920 L921 762 V767.8 H913.2 Z" fill="#ececec"/><ellipse cx="916.9" cy="762.9" rx="1.4" ry="0.9" fill="#2f3236"/><circle cx="945.3" cy="764.8" r="6" fill="#f2a340" stroke="#2a2b2e" stroke-width="1"/><circle cx="962" cy="764.8" r="6" fill="#3d3f43" stroke="#222" stroke-width="1"/><path d="M960 761.3 L965.5 764.8 L960 768.3 Z" fill="#e8e8e8"/><g fill="#4a40e6" stroke="#4a40e6" stroke-linecap="round"><path d="M1044.2 766 L1048.5 770.5 L1051.6 768.5 L1052.7 764 L1046 764 Z" stroke-width="1"/><path d="M1043.8 765.5 L1045.5 767 M1045 762.2 L1046.3 765.5 M1047.7 760.8 L1048.2 765 M1050.4 761.6 L1050 765 M1052.6 763.3 L1051.8 766" stroke-width="1.9" fill="none"/></g><path d="M1036 785 L1043 785 L1039.5 790.5 Z" fill="#0e2a30"/><path d="M944.0,828.4 L945.8,829.6 L947.5,830.8 L949.3,832.0 L951.0,833.2 L952.8,834.4 L954.5,835.6 L956.3,836.8 L958.1,838.0 L959.8,839.1 L961.6,840.2 L963.3,841.3 L965.1,842.4 L966.9,843.4 L968.6,844.4 L970.4,845.3 L972.1,846.2 L973.9,847.1 L975.6,847.9 L977.4,848.7 L979.2,849.4 L980.9,850.1 L982.7,850.7 L984.4,851.2 L986.2,851.7 L988.0,852.1 L989.7,852.5 L991.5,852.8 L993.2,853.0 L995.0,853.2 L996.8,853.3 L998.5,853.3 L1000.3,853.3 L1002.0,853.2 L1003.8,853.0 L1005.5,852.8 L1007.3,852.5 L1009.1,852.1 L1010.8,851.7 L1012.6,851.2 L1014.3,850.7 L1016.1,850.1 L1017.9,849.4 L1019.6,848.7 L1021.4,847.9 L1023.1,847.1 L1024.9,846.2 L1026.6,845.3 L1028.4,844.4 L1030.2,843.4 L1031.9,842.4 L1033.7,841.3 L1035.4,840.2 L1037.2,839.1 L1039.0,837.9 L1040.7,836.8 L1042.5,835.6 L1044.2,834.4 L1046.0,833.2 L1047.7,832.0 L1049.5,830.8 L1051.3,829.6 L1053.0,828.4 L1054.8,827.2 L1056.5,826.1 L1058.3,824.9 L1060.0,823.8 L1061.8,822.6 L1063.6,821.6 L1065.3,820.5 L1067.1,819.5 L1068.8,818.5 L1070.6,817.6 L1072.4,816.6 L1074.1,815.8 L1075.9,815.0 L1077.6,814.2 L1079.4,813.5 L1081.2,812.9 L1082.9,812.3 L1084.7,811.7 L1086.4,811.2 L1088.2,810.8 L1089.9,810.5 L1091.7,810.2 L1093.5,810.0 L1095.2,809.8 L1097.0,809.7 L1098.7,809.7 L1100.5,809.7 L1102.2,809.9 L1104.0,810.0 L1105.8,810.3 L1107.5,810.6 L1109.3,810.9 L1111.0,811.4 L1112.8,811.9 L1114.6,812.4 L1116.3,813.0 L1118.1,813.7 L1119.8,814.4 L1121.6,815.2 L1123.3,816.0 L1125.1,816.9 L1126.9,817.8 L1128.6,818.8 L1130.4,819.8 L1132.1,820.8 L1133.9,821.8 L1135.7,822.9 L1137.4,824.1 L1139.2,825.2 L1140.9,826.4 L1142.7,827.5 L1144.5,828.7 L1146.2,829.9 L1148.0,831.1 L1149.7,832.3 L1151.5,833.5 L1153.2,834.7 L1155.0,835.9" fill="none" stroke="#12b5c9" stroke-width="1.6"/><path d="M1005.6 874.3 L1011.6 874.3 L1008.6 877.3 Z" fill="#12b5c9"/><path d="M1260 832 H1300" stroke="#505256" stroke-width="1"/><path d="M1167 831.6 L1240 831.6 C1258 831.8 1268 836 1276 839.5 C1284 837 1290 832.3 1308 832 L1374 831.8" stroke="#c8c9cb" stroke-width="1.6" fill="none"/><circle cx="1183.7" cy="831.6" r="6.2" fill="#b3b5b8"/><circle cx="1274.3" cy="841.8" r="5.6" fill="#46484c" stroke="#c8c9cb" stroke-width="1.3"/><path d="M974.80 926.07 A12.2 12.2 0 1 1 987.00 926.07" stroke="#1f2023" stroke-width="2.2" fill="none"/><path d="M974.80 926.07 A12.2 12.2 0 0 1 986.27 904.54" stroke="#07c0d3" stroke-width="2.2" fill="none"/><path d="M980.90 915.50 L986.56 903.95" stroke="#1f2023" stroke-width="2.2"/><path d="M1042.90 926.07 A12.2 12.2 0 1 1 1055.10 926.07" stroke="#1f2023" stroke-width="2.2" fill="none"/><path d="M1042.90 926.07 A12.2 12.2 0 1 1 1055.10 926.07" stroke="#07c0d3" stroke-width="2.2" fill="none"/><path d="M1049.00 915.50 L1055.43 926.64" stroke="#1f2023" stroke-width="2.2"/><path d="M1110.70 926.07 A12.2 12.2 0 1 1 1122.90 926.07" stroke="#1f2023" stroke-width="2.2" fill="none"/><path d="M1110.70 926.07 A12.2 12.2 0 1 1 1123.97 905.63" stroke="#07c0d3" stroke-width="2.2" fill="none"/><path d="M1116.80 915.50 L1124.36 905.10" stroke="#1f2023" stroke-width="2.2"/><circle cx="9" cy="962.5" r="7.5" fill="#2b2e31"/><circle cx="9" cy="958.8" r="1.2" fill="#45494d"/><rect x="7.9" y="961" width="2.2" height="6" fill="#45494d"/></svg>
</body></html>
